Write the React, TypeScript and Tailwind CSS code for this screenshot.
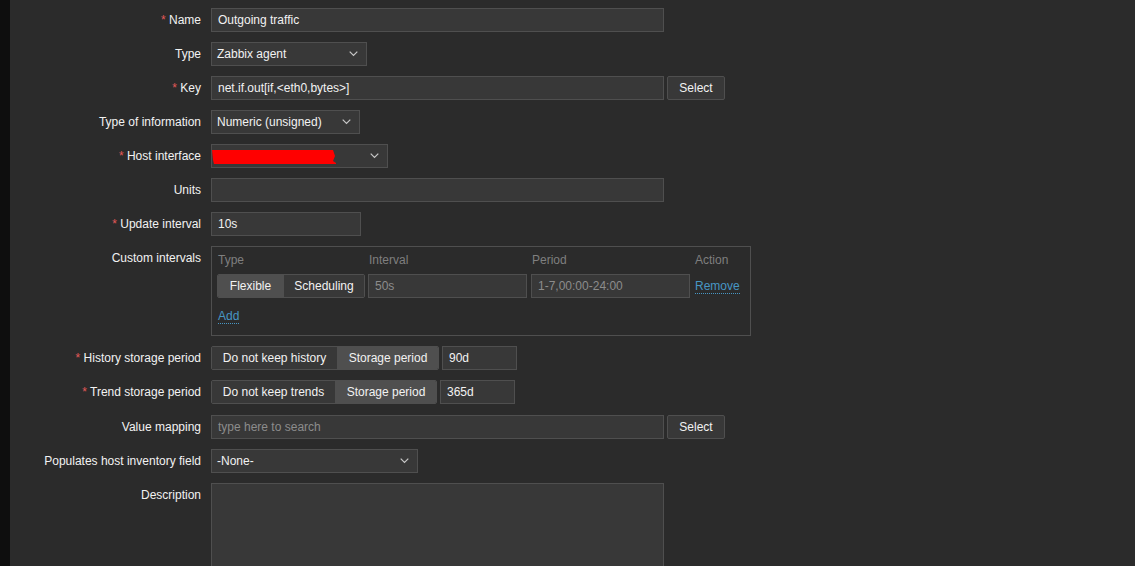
import React from 'react';

const font = { fontFamily: '"Liberation Sans", Arial, sans-serif' };

function Label({ text, required }: { text: string; required?: boolean }) {
    return (
        <div className="w-[191px] shrink-0 text-right leading-[24px] text-[#f2f2f2]">
            {required && <span className="text-[#e45959]">* </span>}
            {text}
        </div>
    );
}

function Chevron() {
    return (
        <svg width="9" height="6" viewBox="0 0 9 6" className="shrink-0">
            <polyline points="0.7,0.7 4.5,4.5 8.3,0.7" fill="none" stroke="#c8c8c8" strokeWidth="1.2" />
        </svg>
    );
}

function Input({ value, width, placeholder, dim }: { value?: string; width: string; placeholder?: string; dim?: boolean }) {
    return (
        <div className={`${width} h-[24px] bg-[#383838] border border-[#4f4f4f] px-[6px] leading-[22px] ${dim || placeholder ? 'text-[#8c8c8c]' : 'text-[#f2f2f2]'}`}>
            {value || placeholder}
        </div>
    );
}

function SelectBox({ value, width, redacted }: { value?: string; width: string; redacted?: boolean }) {
    return (
        <div className={`${width} h-[24px] bg-[#383838] border border-[#4f4f4f] pl-[5px] pr-[8px] flex items-center justify-between text-[#f2f2f2]`}>
            {redacted ? (
                <svg width="126" height="20" viewBox="0 0 126 20" className="-ml-[5px] mt-[2px]">
                    <polygon points="0,3 121,3 123,9 121,14 124,16 124,17 2,17 1,13" fill="#ff0000" />
                </svg>
            ) : (
                <span>{value}</span>
            )}
            <Chevron />
        </div>
    );
}

function Button({ text }: { text: string }) {
    return (
        <div className="w-[58px] h-[24px] bg-[#383838] border border-[#4f4f4f] rounded-[2px] text-center leading-[22px] text-[#f2f2f2]">
            {text}
        </div>
    );
}

function Segmented({ items, active, widths }: { items: string[]; active: number; widths: string[] }) {
    return (
        <div className="flex h-[24px] border border-[#4f4f4f] rounded-[2px] overflow-hidden">
            {items.map((it, i) => (
                <div
                    key={it}
                    className={`${widths[i]} text-center leading-[22px] text-[#f2f2f2] ${i === active ? 'bg-[#4f4f4f]' : 'bg-[#383838]'} ${i > 0 ? 'border-l border-[#4f4f4f]' : ''}`}
                >
                    {it}
                </div>
            ))}
        </div>
    );
}

function Row({ children, extra = '' }: { children: React.ReactNode; extra?: string }) {
    return <div className={`flex items-start gap-[10px] ${extra}`}>{children}</div>;
}

export default function App() {
    return (
        <div className="flex h-screen overflow-hidden bg-[#2b2b2b] text-[12px]" style={font}>
            <div className="w-[10px] shrink-0 bg-[#0e0e0e]" />
            <div className="flex-1 pt-[8px] flex flex-col gap-[10px]">
                <Row>
                    <Label text="Name" required />
                    <Input value="Outgoing traffic" width="w-[453px]" />
                </Row>
                <Row>
                    <Label text="Type" />
                    <SelectBox value="Zabbix agent" width="w-[156px]" />
                </Row>
                <Row>
                    <Label text="Key" required />
                    <div className="flex gap-[3px]">
                        <Input value="net.if.out[if,<eth0,bytes>]" width="w-[453px]" />
                        <Button text="Select" />
                    </div>
                </Row>
                <Row>
                    <Label text="Type of information" />
                    <SelectBox value="Numeric (unsigned)" width="w-[149px]" />
                </Row>
                <Row>
                    <Label text="Host interface" required />
                    <SelectBox width="w-[177px]" redacted />
                </Row>
                <Row>
                    <Label text="Units" />
                    <Input width="w-[453px]" />
                </Row>
                <Row>
                    <Label text="Update interval" required />
                    <Input value="10s" width="w-[150px]" />
                </Row>
                <Row>
                    <Label text="Custom intervals" />
                    <div className="w-[540px] h-[90px] border border-[#4f4f4f] pl-[5px] pt-[6px]">
                        <div className="flex h-[14px] leading-[14px] text-[#7f7f7f]">
                            <div className="w-[151px] pl-[1px]">Type</div>
                            <div className="w-[163px] pl-[1px]">Interval</div>
                            <div className="w-[164px] pl-[1px]">Period</div>
                            <div>Action</div>
                        </div>
                        <div className="flex items-center mt-[7px]">
                            <Segmented items={['Flexible', 'Scheduling']} active={0} widths={['w-[65px]', 'w-[81px]']} />
                            <div className="ml-[3px]">
                                <Input value="50s" width="w-[159px]" dim />
                            </div>
                            <div className="ml-[4px]">
                                <Input value="1-7,00:00-24:00" width="w-[159px]" dim />
                            </div>
                            <span className="ml-[5px] mt-[2px] text-[#4796c4] border-b border-dotted border-[#4796c4] leading-[13px]">Remove</span>
                        </div>
                        <div className="mt-[9px] pl-[1px]">
                            <span className="text-[#4796c4] border-b border-dotted border-[#4796c4] leading-[13px]">Add</span>
                        </div>
                    </div>
                </Row>
                <Row>
                    <Label text="History storage period" required />
                    <div className="flex gap-[3px]">
                        <Segmented items={['Do not keep history', 'Storage period']} active={1} widths={['w-[125px]', 'w-[101px]']} />
                        <Input value="90d" width="w-[75px]" />
                    </div>
                </Row>
                <Row>
                    <Label text="Trend storage period" required />
                    <div className="flex gap-[3px]">
                        <Segmented items={['Do not keep trends', 'Storage period']} active={1} widths={['w-[123px]', 'w-[101px]']} />
                        <Input value="365d" width="w-[75px]" />
                    </div>
                </Row>
                <Row extra="mt-[1px]">
                    <Label text="Value mapping" />
                    <div className="flex gap-[3px]">
                        <Input placeholder="type here to search" width="w-[453px]" />
                        <Button text="Select" />
                    </div>
                </Row>
                <Row>
                    <Label text="Populates host inventory field" />
                    <SelectBox value="-None-" width="w-[207px]" />
                </Row>
                <Row>
                    <Label text="Description" />
                    <div className="w-[453px] h-[110px] bg-[#383838] border border-[#4f4f4f]" />
                </Row>
            </div>
        </div>
    );
}
